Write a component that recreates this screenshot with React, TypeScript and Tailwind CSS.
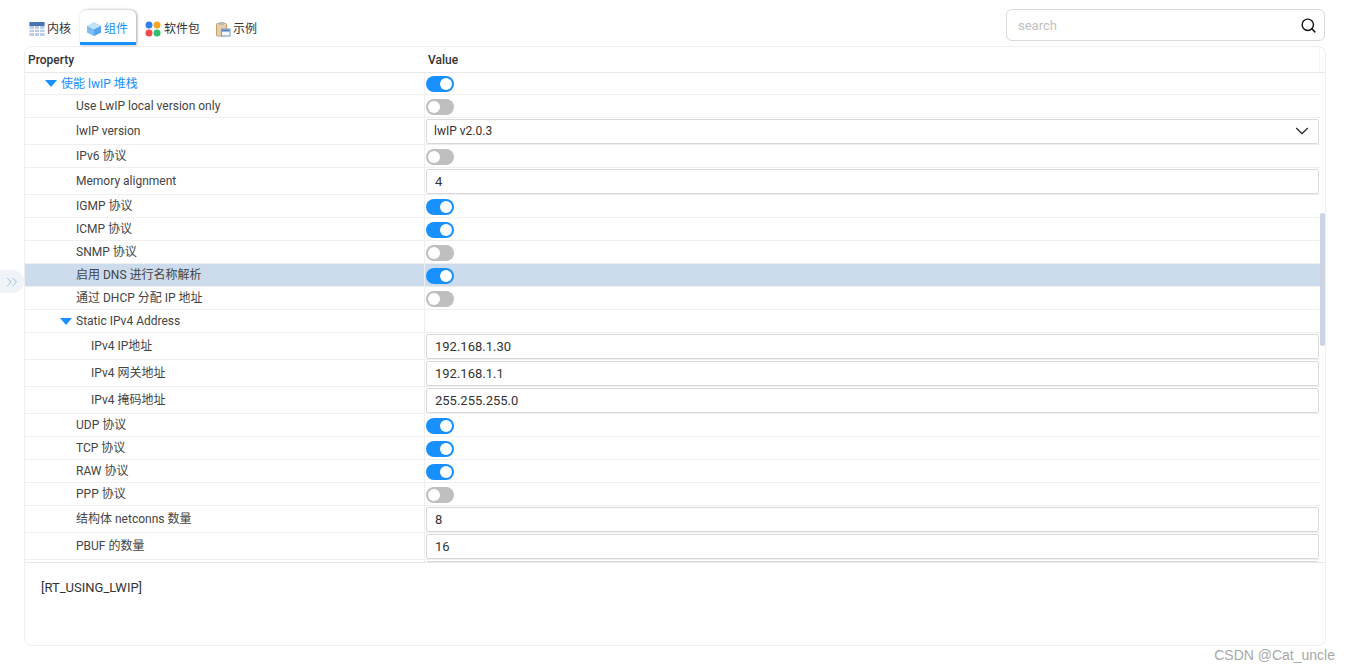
import { ChevronDown, ChevronsRight, Search } from 'lucide-react';

type Row = {
  label: string;
  level: number;
  kind: 'toggle' | 'input' | 'select' | 'none';
  on?: boolean;
  value?: string;
  expand?: boolean;
  active?: boolean;
  selected?: boolean;
};

const rows: Row[] = [
  { label: '使能 lwIP 堆栈', level: 0, kind: 'toggle', on: true, expand: true, active: true },
  { label: 'Use LwIP local version only', level: 1, kind: 'toggle' },
  { label: 'lwIP version', level: 1, kind: 'select', value: 'lwIP v2.0.3' },
  { label: 'IPv6 协议', level: 1, kind: 'toggle' },
  { label: 'Memory alignment', level: 1, kind: 'input', value: '4' },
  { label: 'IGMP 协议', level: 1, kind: 'toggle', on: true },
  { label: 'ICMP 协议', level: 1, kind: 'toggle', on: true },
  { label: 'SNMP 协议', level: 1, kind: 'toggle' },
  { label: '启用 DNS 进行名称解析', level: 1, kind: 'toggle', on: true, selected: true },
  { label: '通过 DHCP 分配 IP 地址', level: 1, kind: 'toggle' },
  { label: 'Static IPv4 Address', level: 1, kind: 'none', expand: true },
  { label: 'IPv4 IP地址', level: 2, kind: 'input', value: '192.168.1.30' },
  { label: 'IPv4 网关地址', level: 2, kind: 'input', value: '192.168.1.1' },
  { label: 'IPv4 掩码地址', level: 2, kind: 'input', value: '255.255.255.0' },
  { label: 'UDP 协议', level: 1, kind: 'toggle', on: true },
  { label: 'TCP 协议', level: 1, kind: 'toggle', on: true },
  { label: 'RAW 协议', level: 1, kind: 'toggle', on: true },
  { label: 'PPP 协议', level: 1, kind: 'toggle' },
  { label: '结构体 netconns 数量', level: 1, kind: 'input', value: '8' },
  { label: 'PBUF 的数量', level: 1, kind: 'input', value: '16' },
  { label: '', level: 1, kind: 'input', value: '' },
];

function TableIcon() {
  return (
    <svg width="16" height="16" viewBox="0 0 16 16">
      <rect x="0.5" y="1" width="15" height="14" fill="#b9cbe6" />
      <rect x="0.5" y="1" width="15" height="4" fill="#4a74b0" />
      <path d="M5.5 5v10M10.5 5v10M0.5 8.3h15M0.5 11.6h15" stroke="#fff" strokeWidth="1" />
    </svg>
  );
}

function CubeIcon() {
  return (
    <svg width="16" height="16" viewBox="0 0 16 16">
      <path d="M8 1.5 15 5v6.5L8 15 1 11.5V5z" fill="#7dbcf5" />
      <path d="M8 1.5 15 5 8 8.5 1 5z" fill="#c4e1fa" />
      <path d="M8 8.5 15 5v6.5L8 15z" fill="#5aa6ee" />
    </svg>
  );
}

function AppsIcon() {
  return (
    <svg width="16" height="16" viewBox="0 0 16 16">
      <circle cx="4" cy="4" r="3.5" fill="#2f80ed" />
      <circle cx="12" cy="4" r="3.5" fill="#f5a623" />
      <circle cx="4" cy="12" r="3.5" fill="#ee4b4b" />
      <circle cx="12" cy="12" r="3.5" fill="#2fbf71" />
    </svg>
  );
}

function ClipboardIcon() {
  return (
    <svg width="16" height="16" viewBox="0 0 16 16">
      <rect x="1.5" y="2.5" width="10" height="12.5" rx="1" fill="#e8cfa8" stroke="#bf9f72" />
      <rect x="4" y="1" width="5" height="3" rx="0.5" fill="#b9b9b9" />
      <rect x="6.5" y="8" width="8.5" height="7" fill="#f2f6fb" stroke="#7f9cc0" />
      <rect x="7" y="8.5" width="7.5" height="2" fill="#4a7fc0" />
    </svg>
  );
}

function Toggle({ on, first }: { on?: boolean; first: boolean }) {
  return (
    <div className={`flex h-4 w-7 items-center rounded-full px-[2px] ${first ? '' : 'mt-[2px]'} ${on ? 'justify-end bg-[#1890ff]' : 'justify-start bg-[#bfbfbf]'}`}>
      <div className="h-3 w-3 rounded-full bg-white" />
    </div>
  );
}

function ValueCell({ row, first }: { row: Row; first: boolean }) {
  if (row.kind === 'toggle') return <Toggle on={row.on} first={first} />;
  if (row.kind === 'input') {
    return (
      <input
        readOnly
        value={row.value}
        className="h-[25px] w-full rounded-[2px] border border-[#d9d9d9] bg-white px-2 text-[13px] text-[#333] outline-none"
      />
    );
  }
  if (row.kind === 'select') {
    return (
      <div className="flex h-[25px] w-full items-center justify-between rounded-[2px] border border-[#d9d9d9] bg-white pl-[7px] pr-[5px] text-[12px] text-[#333]">
        <span>{row.value}</span>
        <ChevronDown size={22} strokeWidth={1.2} className="shrink-0 text-[#222]" />
      </div>
    );
  }
  return null;
}

function PropertyRow({ row, first }: { row: Row; first: boolean }) {
  const height = first ? 'h-[22px]' : row.kind === 'input' || row.kind === 'select' ? 'h-[27px]' : 'h-[23px]';
  const indent = row.level === 0 ? 'pl-[20px]' : row.level === 1 ? (row.expand ? 'pl-[35px]' : 'pl-[51px]') : 'pl-[66px]';
  return (
    <div className={`flex shrink-0 border-b border-[#efefef] ${height} ${row.selected ? 'bg-[#cddcec]' : ''}`}>
      <div className={`flex w-[400px] shrink-0 items-center gap-[4px] border-r border-[#efefef] text-[12px] ${indent} ${row.active ? 'text-[#1890ff]' : 'text-[#444]'}`}>
        {row.expand && (
          <svg width="12" height="7" viewBox="0 0 12 7">
            <path d="M0 0h12L6 7z" fill="#1890ff" />
          </svg>
        )}
        <span>{row.label}</span>
      </div>
      <div className="flex min-w-0 flex-1 items-center pl-[1px] pr-[1px]">
        <ValueCell row={row} first={first} />
      </div>
    </div>
  );
}

export default function App() {
  return (
    <div
      className="relative h-[670px] w-[1350px] overflow-hidden bg-white pl-6 pr-6 pt-[9px] text-[#333]"
      style={{ fontFamily: 'Roboto, "Noto Sans CJK SC", sans-serif' }}
    >
      {/* Toolbar */}
      <div className="flex h-[37px] items-start justify-between">
        <div className="flex items-center text-[12px] text-[#333]">
          <div className="mt-[4px] flex items-center gap-[2px] pl-[5px] pr-[9px]"><TableIcon /><span>内核</span></div>
          <div className="mt-px flex h-[35px] items-center gap-[2px] rounded-t-[6px] border-b-[3px] border-[#1890ff] pl-[6px] pr-[8px] pt-[5px] text-[#1890ff] shadow-[1px_0_3px_rgba(0,0,0,0.35)]">
            <CubeIcon /><span>组件</span>
          </div>
          <div className="mt-[4px] flex items-center gap-[2px] pl-[9px] pr-[15px]"><AppsIcon /><span className="pl-px">软件包</span></div>
          <div className="mt-[4px] flex items-center gap-[2px]"><ClipboardIcon /><span>示例</span></div>
        </div>
        <div className="mr-px flex h-8 w-[319px] items-center justify-between rounded-[6px] border border-[#d9d9d9] pl-[11px] pr-[7px]">
          <span className="pt-[2px] text-[13px] text-[#bfbfbf]">search</span>
          <Search size={17} strokeWidth={2} className="text-[#111]" />
        </div>
      </div>

      {/* Property panel */}
      <div className="flex h-[600px] w-[1302px] flex-col overflow-hidden rounded-[8px] border border-[#efefef]">
        <div className="flex h-[26px] shrink-0 border-b border-[#e8e8e8] text-[12px] font-medium text-[#333]">
          <div className="flex w-[400px] shrink-0 items-center pl-[3px]">Property</div>
          <div className="mr-[5px] flex flex-1 items-center border-r border-[#f3f3f3] pl-[3px]">Value</div>
        </div>
        <div className="flex h-[490px] shrink-0 border-b border-[#e8e8e8]">
          <div className="flex min-w-0 flex-1 flex-col overflow-hidden">
            {rows.map((row, i) => (
              <PropertyRow key={i} row={row} first={i === 0} />
            ))}
          </div>
          <div className="w-[5px] shrink-0 pt-[140px]">
            <div className="h-[133px] w-[5px] rounded-[2px] bg-[#ccd5e3]" />
          </div>
        </div>
        <div className="pl-[16px] pt-[15px] text-[13px] text-[#333]">[RT_USING_LWIP]</div>
      </div>

      {/* Collapse handle */}
      <div className="absolute left-0 top-[270px] flex h-[23px] w-6 items-center justify-center rounded-r-full bg-[#f0f4f9] text-[#8fb4dc]">
        <ChevronsRight size={18} strokeWidth={1.2} />
      </div>

      {/* Watermark */}
      <div
        className="absolute right-[15px] top-[645px] text-[14px] text-[#a8a8a8]"
        style={{ fontFamily: '"Liberation Sans", sans-serif' }}
      >
        CSDN @Cat_uncle
      </div>
    </div>
  );
}
